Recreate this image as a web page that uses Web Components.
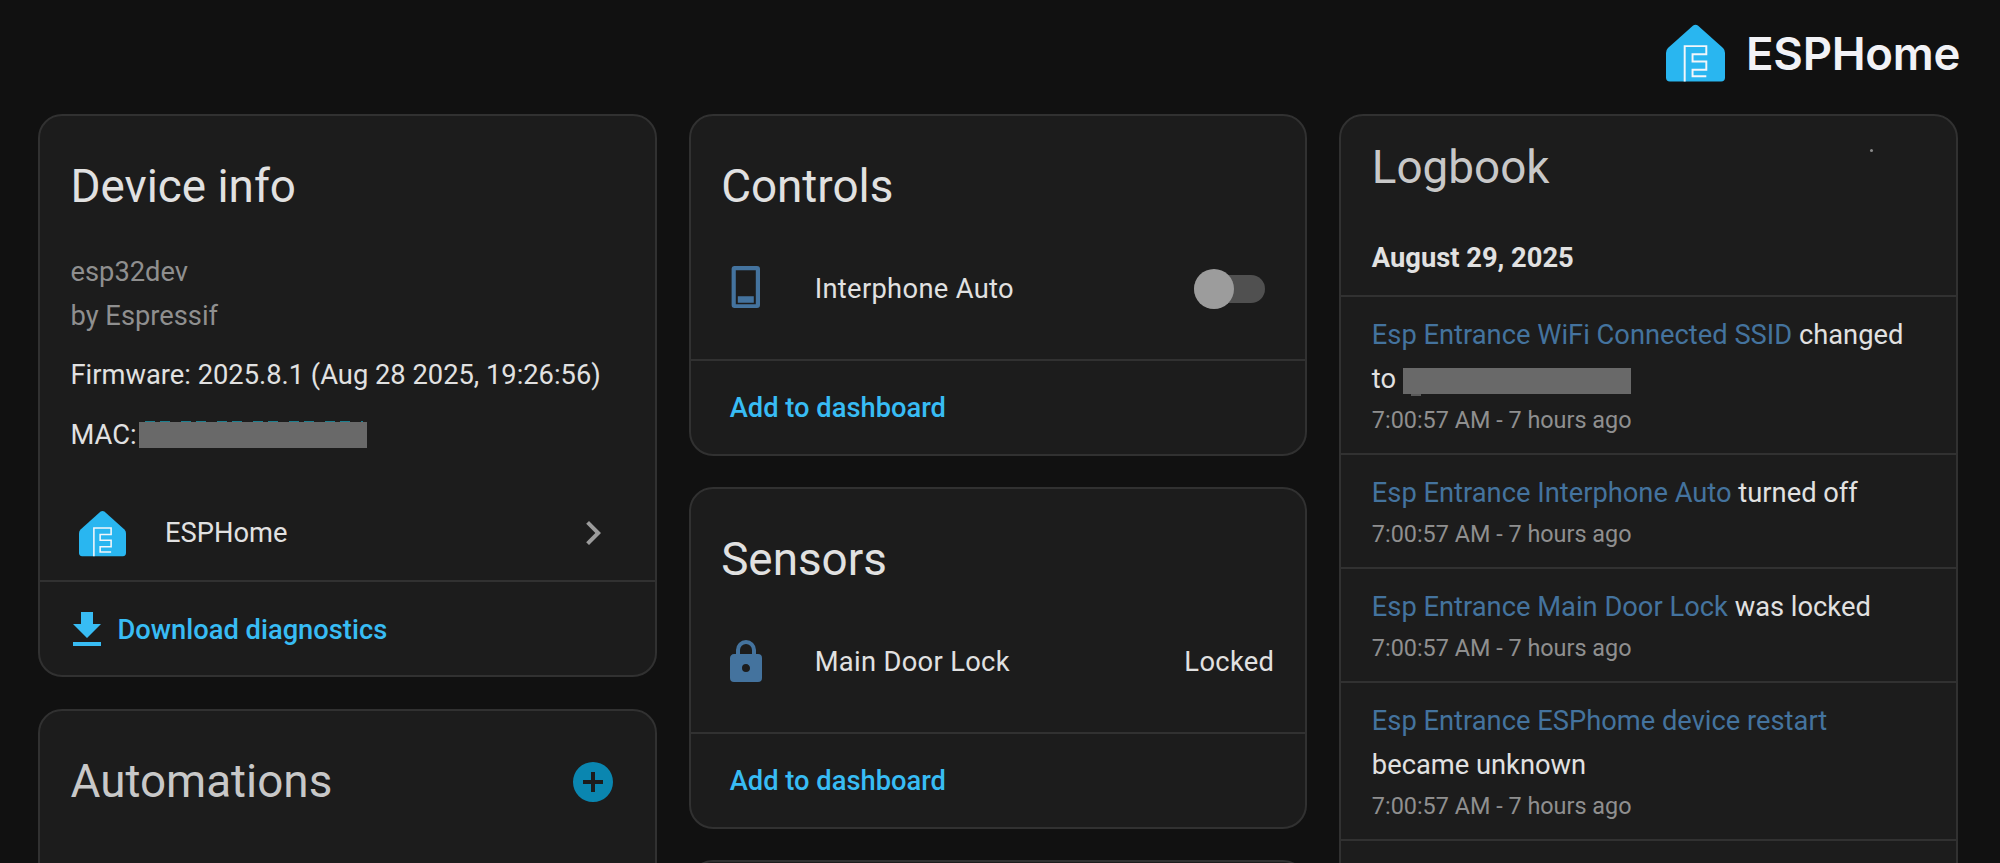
<!DOCTYPE html>
<html lang="en">
<head>
<meta charset="utf-8">
<title>ESPHome device</title>
<style>
  html, body { margin: 0; height: 100%; overflow: hidden; background: #111111; }
  body { font: 400 27.3px/44px Roboto, "Liberation Sans", sans-serif; color: #e1e1e1; }
  .page-head { display: flex; justify-content: flex-end; height: 114px; padding-right: 40px; }
  .columns { display: grid; grid-template-columns: repeat(3, 1fr); gap: 32px; padding: 0 42px 0 38px; align-items: start; }
  .stack { display: flex; flex-direction: column; gap: 32px; }
  .stack.tight { gap: 31px; }
</style>
</head>
<body>
<div class="page-head"><esp-brand></esp-brand></div>
<div class="columns">
  <div class="stack">
    <ha-card heading="Device info">
      <device-info></device-info>
      <integration-row slot="rows"></integration-row>
      <card-action slot="actions" icon="download">Download diagnostics</card-action>
    </ha-card>
    <ha-card heading="Automations" dim>
      <mdi-icon slot="tools" name="plusCircle" style="color:#0a86b0"></mdi-icon>
      <div style="height:300px"></div>
    </ha-card>
  </div>
  <div class="stack tight">
    <ha-card heading="Controls">
      <entity-row label="Interphone Auto" icon="phone"><toggle-switch></toggle-switch></entity-row>
      <card-action slot="actions">Add to dashboard</card-action>
    </ha-card>
    <ha-card heading="Sensors">
      <entity-row label="Main Door Lock" icon="lock">Locked</entity-row>
      <card-action slot="actions">Add to dashboard</card-action>
    </ha-card>
    <ha-card></ha-card>
  </div>
  <div class="stack">
    <log-book>
      <log-entry name="Esp Entrance WiFi Connected SSID">changed to <redact-box width="228" peek="below"></redact-box></log-entry>
      <log-entry name="Esp Entrance Interphone Auto">turned off</log-entry>
      <log-entry name="Esp Entrance Main Door Lock">was locked</log-entry>
      <log-entry name="Esp Entrance ESPhome device restart">became unknown</log-entry>
    </log-book>
  </div>
</div>

<script>
const ICONS = {
  download: "M5,20H19V18H5M19,9H15V3H9V9H5L12,16L19,9Z",
  chevron: "M8.59,16.58L13.17,12L8.59,7.41L10,6L16,12L10,18L8.59,16.58Z",
  plusCircle: "M17,13H13V17H11V13H7V11H11V7H13V11H17M12,2A10,10 0 0,0 2,12A10,10 0 0,0 12,22A10,10 0 0,0 22,12A10,10 0 0,0 12,2Z",
  lock: "M12,17A2,2 0 0,0 14,15C14,13.89 13.1,13 12,13A2,2 0 0,0 10,15A2,2 0 0,0 12,17M18,8A2,2 0 0,1 20,10V20A2,2 0 0,1 18,22H6A2,2 0 0,1 4,20V10C4,8.89 4.9,8 6,8H7V6A5,5 0 0,1 12,1A5,5 0 0,1 17,6V8H18M12,3A3,3 0 0,0 9,6V8H15V6A3,3 0 0,0 12,3Z",
  phone: "M6.3,.5H17.5A1.5,1.5 0 0,1 19,2V20A1.5,1.5 0 0,1 17.5,21.5H6.3A1.5,1.5 0 0,1 4.8,20V2A1.5,1.5 0 0,1 6.3,.5ZM6.9,2.6V19.6H16.9V2.6ZM7.9,15.6H15.9V18.9H7.9Z"
};

const LOGO_SVG = `
  <svg viewBox="0 0 60 58" width="100%" height="100%" aria-hidden="true">
    <path fill="#29b6f0" d="M27.6,1 Q30,-0.6 32.4,1 L58,24 Q60,26 60,29 V54 Q60,58 56,58 H4 Q0,58 0,54 V29 Q0,26 2,24 Z"/>
    <path fill="none" stroke="#f2f6fa" stroke-width="2" d="M19,58 V22 H41 V30.3 H27 V37.6 H41 V46 H27 V52.6 H41"/>
  </svg>`;

class EspBrand extends HTMLElement {
  constructor() {
    super();
    this.attachShadow({ mode: "open" });
    this.shadowRoot.innerHTML = `
  <style>
    :host { display: flex; align-items: flex-start; gap: 21px; padding-top: 24px; }
    .mark { width: 59px; height: 58px; }
    .name { font: 600 45.5px/60px Inter, sans-serif; color: #f2f2f6; letter-spacing: -0.3px; }
  </style>
  <div class="mark">${LOGO_SVG}</div>
  <div class="name">ESPHome</div>`;
  }
}

class MdiIcon extends HTMLElement {
  constructor() {
    super();
    this.attachShadow({ mode: "open" });
    const d = ICONS[this.getAttribute("name")] || "";
    this.shadowRoot.innerHTML = `
  <style>
    :host { display: block; width: 48px; height: 48px; flex: none; }
    svg { display: block; fill: currentColor; fill-rule: evenodd; }
  </style>
  <svg viewBox="0 0 24 24" width="48" height="48"><path d="${d}"/></svg>`;
  }
}

class HaCard extends HTMLElement {
  constructor() {
    super();
    this.attachShadow({ mode: "open" });
    const heading = this.getAttribute("heading");
    this.shadowRoot.innerHTML = `
  <style>
    :host { display: block; background: #1c1c1c; border: 2px solid #313131; border-radius: 24px; overflow: hidden; min-height: 200px; }
    header { display: flex; justify-content: space-between; align-items: center; padding: 39px 38px 22px 30.5px; }
    h1 { margin: 0; font: 400 45.8px/64px Roboto, sans-serif; color: #e1e1e1; }
    :host([dim]) h1 { color: #c8c8c8; }
    .actions { border-top: 2px solid #313131; }
  </style>
  ${heading ? `<header><h1>${heading}</h1><slot name="tools"></slot></header>` : ""}
  <slot></slot>
  <slot name="rows"></slot>
  <div class="actions" ${heading ? "" : "hidden"}><slot name="actions"></slot></div>`;
  }
}

class DeviceInfo extends HTMLElement {
  constructor() {
    super();
    this.attachShadow({ mode: "open" });
    this.shadowRoot.innerHTML = `
  <style>
    :host { display: block; padding: 9px 30.5px 0; }
    .muted { color: #8f8f8f; }
    p { margin: 15px 0 0; }
    .mac { margin-top: 16px; display: flex; align-items: center; }
  </style>
  <div class="muted">esp32dev</div>
  <div class="muted">by Espressif</div>
  <p>Firmware: 2025.8.1 (Aug 28 2025, 19:26:56)</p>
  <div class="mac">MAC:<redact-box width="228" peek="above" style="margin-left:2px"></redact-box></div>`;
  }
}

class IntegrationRow extends HTMLElement {
  constructor() {
    super();
    this.attachShadow({ mode: "open" });
    this.shadowRoot.innerHTML = `
  <style>
    :host { display: flex; align-items: center; height: 94px; margin-top: 29px; padding: 0 38px 0 39px; }
    .mark { width: 47px; height: 47px; flex: none; }
    span { flex: 1; margin-left: 39px; }
    mdi-icon { color: #9b9b9b; }
  </style>
  <div class="mark">${LOGO_SVG}</div>
  <span>ESPHome</span>
  <mdi-icon name="chevron"></mdi-icon>`;
  }
}

class CardAction extends HTMLElement {
  constructor() {
    super();
    this.attachShadow({ mode: "open" });
    const icon = this.getAttribute("icon");
    this.shadowRoot.innerHTML = `
  <style>
    :host { display: flex; align-items: center; gap: 7px; padding: 24px 32px 21px 22.5px; font-weight: 500; color: #38bcf4; min-height: 44px; }
    :host(:not([icon])) { padding: 25px 32px 24px 39px; }
  </style>
  ${icon ? `<mdi-icon name="${icon}"></mdi-icon>` : ""}
  <span><slot></slot></span>`;
  }
}

class EntityRow extends HTMLElement {
  constructor() {
    super();
    this.attachShadow({ mode: "open" });
    this.shadowRoot.innerHTML = `
  <style>
    :host { display: flex; align-items: center; height: 96px; padding: 0 31px; margin-bottom: 22px; letter-spacing: 0.33px; }
    mdi-icon { color: #44739e; margin-right: 45px; }
    .label { flex: 1; }
  </style>
  <mdi-icon name="${this.getAttribute("icon")}"></mdi-icon>
  <span class="label">${this.getAttribute("label")}</span>
  <slot></slot>`;
  }
}

class ToggleSwitch extends HTMLElement {
  constructor() {
    super();
    this.attachShadow({ mode: "open" });
    this.shadowRoot.innerHTML = `
  <style>
    :host { display: flex; align-items: center; width: 71px; height: 40px; margin-right: 9px; }
    .track { flex: 1; height: 28px; border-radius: 14px; background: #505050; display: flex; align-items: center; }
    .knob { width: 40px; height: 40px; border-radius: 50%; background: #9c9c9c; }
  </style>
  <div class="track"><div class="knob"></div></div>`;
  }
}

class RedactBox extends HTMLElement {
  constructor() {
    super();
    this.attachShadow({ mode: "open" });
    const below = this.getAttribute("peek") === "below";
    this.shadowRoot.innerHTML = `
  <style>
    :host { display: inline-block; position: relative; width: ${this.getAttribute("width")}px; height: 26px; background: #696969; vertical-align: middle; }
    /* bit of the hidden value that sticks out of the box */
    .above { position: absolute; left: 6px; right: 4px; top: -1px; height: 1px;
      background: repeating-linear-gradient(90deg, #1d7f8f 0 10px, transparent 10px 15px, #1d7f8f 15px 25px, transparent 25px 36px); }
    .below { position: absolute; left: 8px; width: 10px; bottom: -2px; height: 2px; background: #5a5a5a; }
  </style>
  <div class="${below ? "below" : "above"}"></div>`;
  }
}

class LogBook extends HTMLElement {
  constructor() {
    super();
    this.attachShadow({ mode: "open" });
    this.shadowRoot.innerHTML = `
  <style>
    :host { display: block; position: relative; background: #1c1c1c; border: 2px solid #313131; border-radius: 24px; overflow: hidden; min-height: 900px; }
    h1 { margin: 0; padding: 20px 30.5px 0; font: 400 45.8px/64px Roboto, sans-serif; color: #c8c8c8; }
    .date { padding: 36px 30.5px 15px; font-weight: 700; }
    .dot { position: absolute; left: 529px; top: 33px; width: 3px; height: 3px; border-radius: 50%; background: #8a8a8a; }
  </style>
  <h1>Logbook</h1>
  <div class="dot"></div>
  <div class="date">August 29, 2025</div>
  <slot></slot>`;
  }
}

class LogEntry extends HTMLElement {
  constructor() {
    super();
    this.attachShadow({ mode: "open" });
    this.shadowRoot.innerHTML = `
  <style>
    :host { display: block; border-top: 2px solid #313131; padding: 16px 30.5px 14px; }
    :host(:last-child) { border-bottom: 2px solid #313131; }
    a { color: #44739e; }
    .time { font-size: 23.4px; line-height: 38px; color: #8f8f8f; }
  </style>
  <div><a>${this.getAttribute("name")}</a> <slot></slot></div>
  <div class="time">7:00:57 AM - 7 hours ago</div>`;
  }
}

customElements.define("esp-brand", EspBrand);
customElements.define("mdi-icon", MdiIcon);
customElements.define("ha-card", HaCard);
customElements.define("device-info", DeviceInfo);
customElements.define("integration-row", IntegrationRow);
customElements.define("card-action", CardAction);
customElements.define("entity-row", EntityRow);
customElements.define("toggle-switch", ToggleSwitch);
customElements.define("redact-box", RedactBox);
customElements.define("log-book", LogBook);
customElements.define("log-entry", LogEntry);
</script>
</body>
</html>
